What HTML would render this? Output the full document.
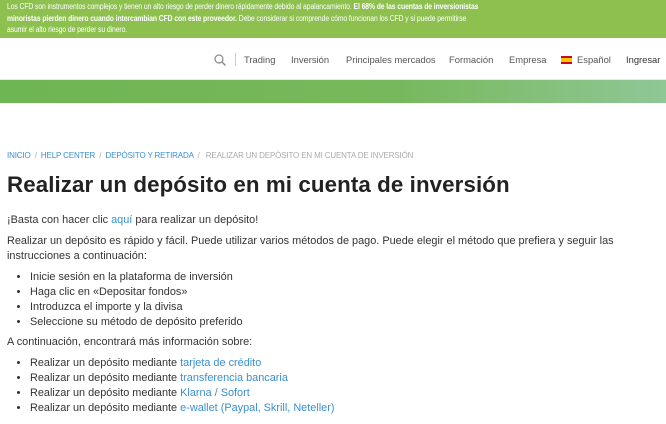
<!DOCTYPE html><html><head><style>
body{margin:0;width:666px;height:424px;overflow:hidden;background:#fff;font-family:"Liberation Sans",sans-serif;color:#333}
.top{background:#8dc04f;height:38px;color:#fff;box-sizing:border-box;padding:1px 7px 0}
.top div{font-size:8.6px;line-height:11.5px;white-space:nowrap;transform:scaleX(0.79);transform-origin:0 0;letter-spacing:-0.1px}
.nav{height:41px;position:relative;font-size:9.4px;color:#555}
.nav span{position:absolute;top:16px}
.strip{height:23px;background:linear-gradient(90deg,#6eb553,#78b85c 60%,#8fc796);border-top:1px solid #e3efd9}
.bc{position:absolute;top:151px;left:7px;font-size:8px;color:#3a8fd0;letter-spacing:-0.15px}
.bc .g{color:#aaa}
h1{position:absolute;top:172px;left:7px;margin:0;font-size:22.3px;color:#222;letter-spacing:0.1px}
.c{position:absolute;top:213px;left:7px;font-size:10.9px;line-height:15px;width:640px}
p{margin:0 0 6px}
ul{margin:0 0 5px;padding-left:23px}
ul.a{margin-top:6px}
a{color:#3a8fd0;text-decoration:none}
</style></head><body>
<div class="top"><div>Los CFD son instrumentos complejos y tienen un alto riesgo de perder dinero rápidamente debido al apalancamiento. <b>El 68% de las cuentas de inversionistas</b><br><b>minoristas pierden dinero cuando intercambian CFD con este proveedor.</b> Debe considerar si comprende cómo funcionan los CFD y si puede permitirse<br>asumir el alto riesgo de perder su dinero.</div></div>
<div class="nav">
<svg style="position:absolute;left:214px;top:16px" width="12" height="12"><circle cx="5" cy="5" r="4" fill="none" stroke="#888" stroke-width="1.2"/><line x1="8" y1="8" x2="11.5" y2="11.5" stroke="#888" stroke-width="1.3"/></svg>
<div style="position:absolute;left:235px;top:15px;width:1px;height:13px;background:#ccc"></div>
<span style="left:244px">Trading</span><span style="left:291px">Inversión</span><span style="left:346px">Principales mercados</span><span style="left:449px">Formación</span><span style="left:509px">Empresa</span>
<div style="position:absolute;left:561px;top:18px;width:11px;height:8px;background:linear-gradient(#c60b1e 25%,#ffc400 25%,#ffc400 75%,#c60b1e 75%)"></div>
<span style="left:577px">Español</span><span style="left:626px;color:#333">Ingresar</span></div>
<div class="strip"></div>
<div class="bc">INICIO &nbsp;<span class="g">/</span>&nbsp; HELP CENTER &nbsp;<span class="g">/</span>&nbsp; DEPÓSITO Y RETIRADA &nbsp;<span class="g">/ &nbsp; REALIZAR UN DEPÓSITO EN MI CUENTA DE INVERSIÓN</span></div>
<h1>Realizar un depósito en mi cuenta de inversión</h1>
<div class="c">
<p>¡Basta con hacer clic <a>aquí</a> para realizar un depósito!</p>
<p>Realizar un depósito es rápido y fácil. Puede utilizar varios métodos de pago. Puede elegir el método que prefiera y seguir las instrucciones a continuación:</p>
<ul class="a"><li>Inicie sesión en la plataforma de inversión</li><li>Haga clic en «Depositar fondos»</li><li>Introduzca el importe y la divisa</li><li>Seleccione su método de depósito preferido</li></ul>
<p>A continuación, encontrará más información sobre:</p>
<ul class="a"><li>Realizar un depósito mediante <a>tarjeta de crédito</a></li><li>Realizar un depósito mediante <a>transferencia bancaria</a></li><li>Realizar un depósito mediante <a>Klarna / Sofort</a></li><li>Realizar un depósito mediante <a>e-wallet (Paypal, Skrill, Neteller)</a></li></ul>
</div>
</body></html>
